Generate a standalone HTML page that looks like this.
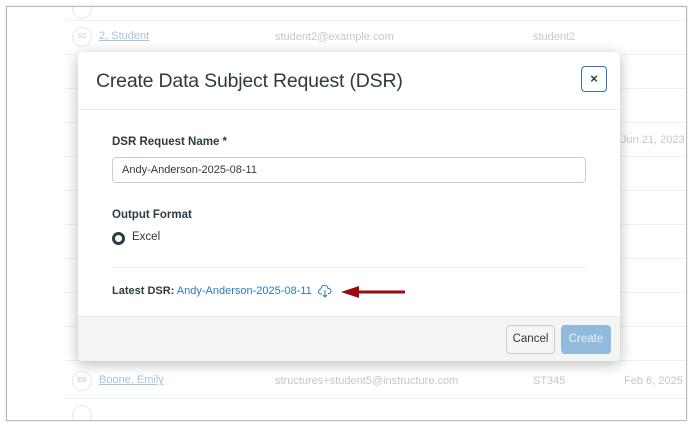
<!DOCTYPE html>
<html><head><style>
*{box-sizing:border-box;margin:0;padding:0}
body{width:698px;height:428px;background:#fff;font-family:"Liberation Sans",sans-serif;position:relative;overflow:hidden}
.frame{position:absolute;left:6px;top:6px;width:681px;height:415px;border:1px solid #b8b8b8;box-shadow:0 0 2px #ddd;overflow:hidden}
.abs{position:absolute}
.line{position:absolute;left:58px;right:0;height:1px;background:#eef0f1}
.g{color:#c4c8cc;font-size:11px;position:absolute}
.av{position:absolute;width:20px;height:20px;border:1px solid #e6e8ea;border-radius:50%;font-size:7px;color:#c4c8cc;text-align:center;line-height:18px}
.lnk{color:#a9c4dd;text-decoration:underline;font-size:11px;position:absolute}
.modal{position:absolute;left:78px;top:52px;width:542px;height:309px;background:#fff;border-radius:4px;box-shadow:0 3px 14px rgba(0,0,0,.28);overflow:hidden}
</style></head><body>
<div class="frame">
<div class="line" style="top:13px"></div>
<div class="line" style="top:47px"></div>
<div class="line" style="top:81px"></div>
<div class="line" style="top:115px"></div>
<div class="line" style="top:149px"></div>
<div class="line" style="top:183px"></div>
<div class="line" style="top:217px"></div>
<div class="line" style="top:251px"></div>
<div class="line" style="top:285px"></div>
<div class="line" style="top:319px"></div>
<div class="line" style="top:353px"></div>
<div class="line" style="top:391px"></div>
<div class="av" style="left:65px;top:-8px"></div>
<div class="av" style="left:65px;top:20px">S2</div>
<div class="lnk" style="left:92px;top:23px">2, Student</div>
<div class="g" style="left:268px;top:24px">student2@example.com</div>
<div class="g" style="left:526px;top:24px">student2</div>
<div class="g" style="left:614px;top:127px">Jun 21, 2023</div>
<div class="av" style="left:65px;top:364px">EB</div>
<div class="lnk" style="left:92px;top:367px">Boone, Emily</div>
<div class="g" style="left:268px;top:368px">structures+student5@instructure.com</div>
<div class="g" style="left:526px;top:368px">ST345</div>
<div class="g" style="left:617px;top:368px">Feb 6, 2025</div>
<div class="av" style="left:65px;top:398px"></div>
</div>
<div class="modal">
<div class="abs" style="left:18px;top:18px;font-size:19.5px;letter-spacing:-0.2px;color:#2d3b45">Create Data Subject Request (DSR)</div>
<div class="abs" style="left:503px;top:14px;width:26px;height:26px;border:1px solid #2b7abc;border-radius:4px;text-align:center;line-height:23px;font-size:13px;color:#2d3b45;font-weight:bold">×</div>
<div class="abs" style="left:0;right:0;top:57px;height:1px;background:#e8eaec"></div>
<div class="abs" style="left:34px;top:84px;font-size:11.5px;font-weight:bold;color:#2d3b45">DSR Request Name *</div>
<div class="abs" style="left:34px;top:105px;width:474px;height:26px;border:1px solid #c7cdd1;border-radius:4px;font-size:11px;color:#2d3b45;padding:6px 0 0 9px">Andy-Anderson-2025-08-11</div>
<div class="abs" style="left:34px;top:157px;font-size:11.5px;font-weight:bold;color:#2d3b45">Output Format</div>
<div class="abs" style="left:34px;top:180px;width:13px;height:13px;border:3.5px solid #2d3b45;border-radius:50%"></div>
<div class="abs" style="left:54px;top:179px;font-size:11.5px;color:#2d3b45">Excel</div>
<div class="abs" style="left:34px;right:34px;top:215px;height:1px;background:#eef0f1"></div>
<div class="abs" style="left:34px;top:233px;font-size:11px;color:#2d3b45;white-space:nowrap"><b>Latest DSR:</b> <span style="color:#2b7abc">Andy-Anderson-2025-08-11</span></div>
<svg class="abs" style="left:240px;top:232px" width="14" height="14" viewBox="0 0 14 14" fill="none" stroke="#2b7abc" stroke-width="1"><path d="M4 10H3a2.5 2.5 0 0 1 0-5 3.5 3.5 0 0 1 7-.5 2.5 2.5 0 0 1 1 5h-1M7 6v7M5 11l2 2 2-2"/></svg>
<svg class="abs" style="left:262px;top:233px" width="68" height="14"><path d="M65 7H17" stroke="#9b0a0a" stroke-width="3"/><path d="M1 7L19 1V13Z" fill="#9b0a0a"/></svg>
<div class="abs" style="left:0;right:0;top:264px;bottom:0;background:#f3f4f4;border-top:1px solid #e8eaec"></div>
<div class="abs" style="left:428px;top:273px;width:49px;height:29px;background:#f5f5f5;border:1px solid #c7cdd1;border-radius:4px;font-size:11.5px;color:#2d3b45;text-align:center;line-height:27px">Cancel</div>
<div class="abs" style="left:483px;top:273px;width:50px;height:29px;background:#93b9dd;border-radius:4px;font-size:11.5px;color:#e8f1fa;text-align:center;line-height:29px">Create</div>
</div>
</body></html>
